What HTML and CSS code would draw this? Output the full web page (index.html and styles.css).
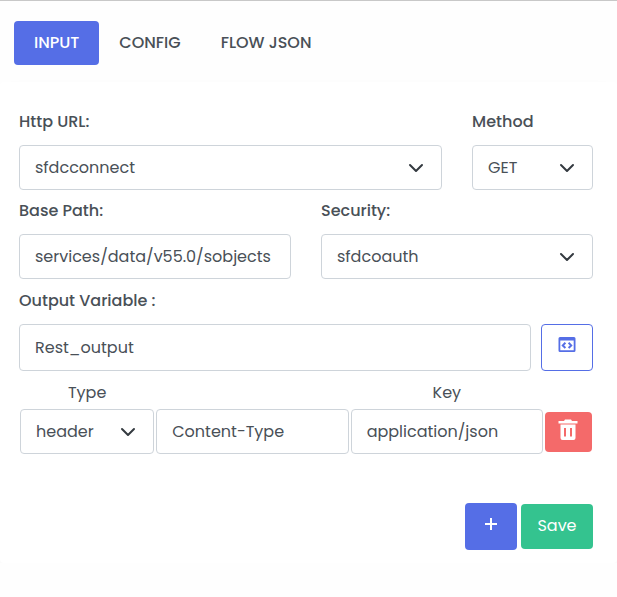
FILE: index.html
```html
<!DOCTYPE html>
<html lang="en">
<head>
  <meta charset="utf-8">
  <meta name="viewport" content="width=device-width, initial-scale=1">
  <title>Flow step</title>
  <link rel="stylesheet" href="styles.css">
</head>
<body>
  <nav class="tabs">
    <button type="button" class="tab tab-active">INPUT</button>
    <button type="button" class="tab">CONFIG</button>
    <button type="button" class="tab">FLOW JSON</button>
  </nav>
  <form class="card">
    <div class="row row-url">
      <div class="field">
        <label for="url">Http URL:</label>
        <div class="select">
          <select id="url" class="control"><option>sfdcconnect</option></select>
          <svg class="chevron" viewBox="0 0 16 16" aria-hidden="true"><path d="M2 5l6 6 6-6"/></svg>
        </div>
      </div>
      <div class="field">
        <label for="method">Method</label>
        <div class="select">
          <select id="method" class="control"><option>GET</option></select>
          <svg class="chevron" viewBox="0 0 16 16" aria-hidden="true"><path d="M2 5l6 6 6-6"/></svg>
        </div>
      </div>
    </div>
    <div class="row row-path">
      <div class="field">
        <label for="path">Base Path:</label>
        <input id="path" class="control" type="text" value="services/data/v55.0/sobjects">
      </div>
      <div class="field">
        <label for="security">Security:</label>
        <div class="select">
          <select id="security" class="control"><option>sfdcoauth</option></select>
          <svg class="chevron" viewBox="0 0 16 16" aria-hidden="true"><path d="M2 5l6 6 6-6"/></svg>
        </div>
      </div>
    </div>
    <div class="field output">
      <label for="output">Output Variable :</label>
      <div class="output-line">
        <input id="output" class="control" type="text" value="Rest_output">
        <button type="button" class="btn btn-outline" aria-label="Edit code">
          <svg class="icon-code" viewBox="0 0 18 16" aria-hidden="true">
            <path fill-rule="evenodd" d="M2 0h14a1.500 1.500 0 0 1 1.500 1.500v12A1.500 1.500 0 0 1 16 15H2a1.500 1.500 0 0 1-1.500-1.500v-12A1.500 1.500 0 0 1 2 0zM2.300 3.600v9.600h13.400V3.600z"/>
            <path class="stroke" d="M7.400 5.800L4.800 8.400 7.400 11M10.600 5.800l2.600 2.600-2.600 2.600"/>
          </svg>
        </button>
      </div>
    </div>
    <div class="params">
      <label class="heading" for="type">Type</label>
      <span></span>
      <label class="heading" for="key">Key</label>
      <span></span>
      <div class="select">
        <select id="type" class="control"><option>header</option></select>
        <svg class="chevron" viewBox="0 0 16 16" aria-hidden="true"><path d="M2 5l6 6 6-6"/></svg>
      </div>
      <input class="control" type="text" value="Content-Type" aria-label="Name">
      <input id="key" class="control" type="text" value="application/json">
      <button type="button" class="btn btn-danger" aria-label="Delete">
        <svg class="icon-trash" viewBox="0 0 20 22" aria-hidden="true">
          <path fill-rule="evenodd" d="M7 .5h6l1 1.500h5.500v2.500H.5V2H6zM2.500 5.500h15V19a2 2 0 0 1-2 2h-11a2 2 0 0 1-2-2zM6 9V17.500h2V9zM12 9V17.500h2V9z"/>
        </svg>
      </button>
    </div>
    <div class="actions">
      <button type="button" class="btn btn-add" aria-label="Add">
        <svg class="icon-plus" viewBox="0 0 12 12" aria-hidden="true"><path d="M6 0v12M0 6h12"/></svg>
      </button>
      <button type="submit" class="btn btn-save">Save</button>
    </div>
  </form>
</body>
</html>
```
FILE: styles.css
```css
* {
  box-sizing: border-box;
}

body {
  margin: 0;
  border-top: 1px solid #c8c8c8;
  background: #fefefe;
  color: #495057;
  font: 400 16px/24px Poppins, Inter, sans-serif;
}

button,
input,
select {
  font: inherit;
  color: inherit;
}

.tabs {
  display: flex;
  padding: 20px 14px 17px;
}

.tab {
  padding: 10px 20px;
  border: 0;
  border-radius: 4px;
  background: none;
  font-weight: 500;
}

.tab-active {
  background: #556ee6;
  color: #fff;
}

.card {
  padding: 28px 24px 13px 19px;
  border-radius: 4px;
  background: #fff;
  box-shadow: 0 12px 24px rgba(18, 38, 63, 0.03);
}

.row {
  display: grid;
  gap: 30px;
}

.row + .row {
  margin-top: 9px;
}

.row-url {
  grid-template-columns: minmax(0, 7fr) minmax(0, 2fr);
}

.row-path {
  grid-template-columns: repeat(2, minmax(0, 1fr));
}

.field {
  display: flex;
  flex-direction: column;
  gap: 11px;
}

.field label {
  font-weight: 500;
}

.output {
  margin-top: 10px;
}

.control {
  width: 100%;
  min-width: 0;
  height: 45px;
  padding: 0 15px;
  border: 1px solid #ced4da;
  border-radius: 4px;
  background: #fff;
  appearance: none;
}

.select {
  display: grid;
  align-items: center;
}

.select > * {
  grid-area: 1 / 1;
}

.chevron {
  width: 16px;
  height: 16px;
  margin-right: 18px;
  justify-self: end;
  pointer-events: none;
  fill: none;
  stroke: #343a40;
  stroke-width: 2;
  stroke-linecap: round;
  stroke-linejoin: round;
}

.output-line {
  display: flex;
  gap: 10px;
}

.output-line .control {
  flex: 1;
  height: 47px;
}

.btn {
  display: flex;
  align-items: center;
  justify-content: center;
  flex: none;
  padding: 0;
  border: 0;
  border-radius: 4px;
  color: #fff;
}

.btn-outline {
  width: 52px;
  padding-bottom: 6px;
  border: 1px solid #556ee6;
  background: #fff;
}

.icon-code {
  width: 18px;
  height: 16px;
  fill: #556ee6;
}

.icon-code .stroke {
  fill: none;
  stroke: #556ee6;
  stroke-width: 2;
}

.params {
  display: grid;
  grid-template-columns: minmax(0, 134fr) minmax(0, 192fr) minmax(0, 192fr) 47px;
  gap: 4px 2px;
  align-items: center;
  padding: 10px 1px 0;
}

.heading {
  text-align: center;
}

.btn-danger {
  height: 40px;
  padding-bottom: 4px;
  background: #f46a6a;
}

.icon-trash {
  width: 20px;
  height: 22px;
  fill: #fff;
}

.actions {
  display: flex;
  align-items: center;
  justify-content: flex-end;
  gap: 4px;
  margin-top: 49px;
}

.btn-add {
  width: 52px;
  height: 47px;
  padding-bottom: 6px;
  background: #556ee6;
}

.icon-plus {
  width: 12px;
  height: 12px;
  fill: none;
  stroke: #fff;
  stroke-width: 2;
}

.btn-save {
  width: 72px;
  height: 45px;
  padding-bottom: 2px;
  background: #34c38f;
}
```
